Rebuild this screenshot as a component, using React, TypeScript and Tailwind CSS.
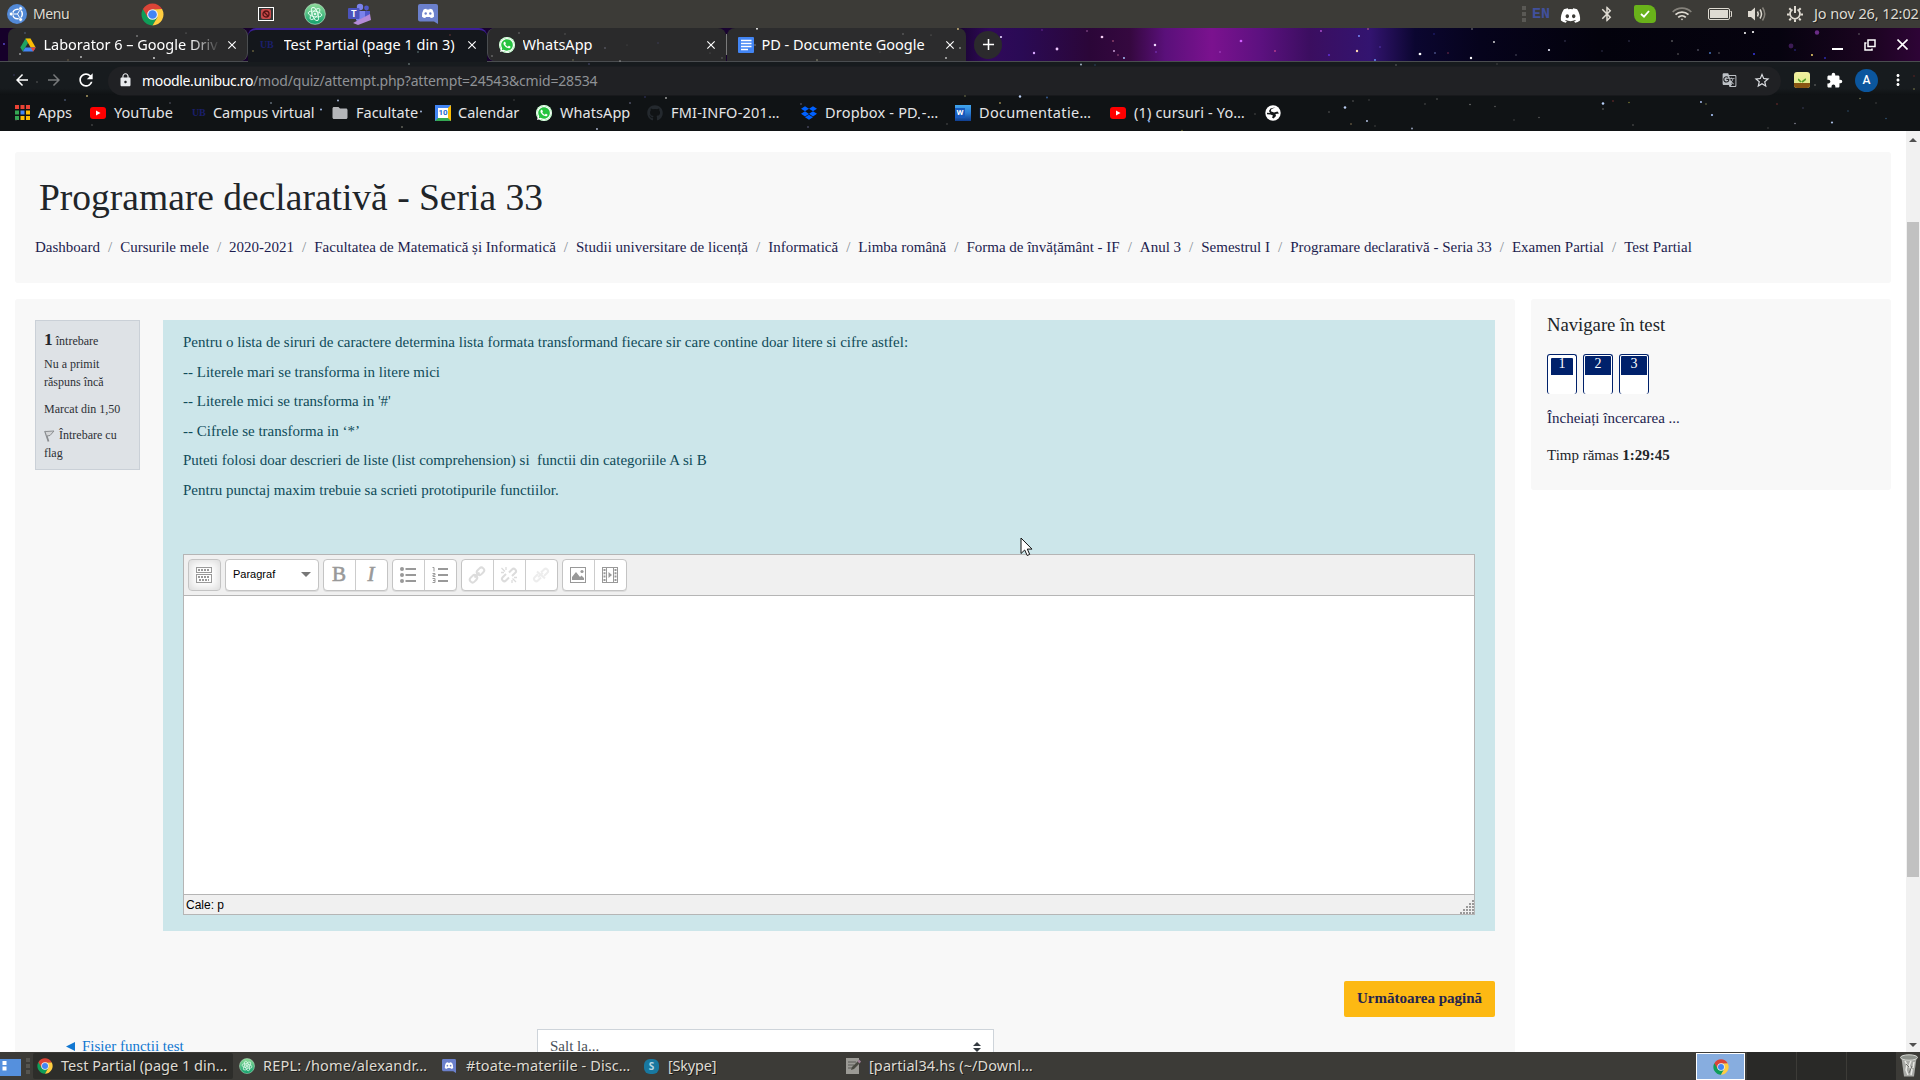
import React from 'react';
import { FaWhatsapp, FaGithub, FaDropbox, FaDiscord } from 'react-icons/fa';
import { MdArrowBack, MdArrowForward, MdRefresh, MdLock, MdStarBorder, MdExtension, MdMoreVert, MdGTranslate, MdFolder, MdBluetooth, MdClose, MdAdd } from 'react-icons/md';

const STARS: [number, number, number, string][] = [
  [4, 16, 1.2, '#5a4bd0'], [20, 26, 1, '#ddd'], [25, 5, 1, '#5a6a8a'], [81, 29, 1.1, '#ccc'], [154, 30, 1.2, '#ddd'], [137, 8, 1, '#aaa'], [186, 5, .7, '#888'], [68, 32, .8, '#875'],
  [253, 23, 1, '#998d50'], [369, 28, 1.2, '#ddd'], [302, 14, .8, '#556'], [450, 7, .8, '#844'], [418, 24, .8, '#8aa'], [409, 36, .9, '#9aa'],
  [519, 5, 1, '#777'], [565, 6, .8, '#666'], [605, 20, .9, '#778'], [658, 15, .8, '#446'], [627, 17, .7, '#555'], [573, 32, .8, '#886'], [620, 33, .9, '#aaa'], [710, 25, .7, '#666'], [492, 28, .9, '#999'], [722, 30, .8, '#777'],
  [757, 0.8, 1.2, '#eee'], [755, 17, .9, '#999'], [958, 1, 1.2, '#c9b27a'], [946, 30, 1.1, '#ccc'], [817, 32, .9, '#aa8'], [903, 6, .8, '#888'], [960, 20, 1, '#ccc'], [931, 7, .7, '#777'], [880, 24, .7, '#666'],
  [1001, 9, 1.4, '#e8d8ff'], [1034, 25, 1.5, '#d9a8ff'], [1057, 21, 1.8, '#f0c8ff'], [1102, 9, 1.7, '#f7d0f5'], [1113, 13, 1, '#c86a8a'], [1114, 23, 1.1, '#d8b0e8'], [1118, 27, .9, '#b06090'], [1124, 30, 1.2, '#a8c8ff'], [1155, 17, 1.6, '#f0d8ff'], [1156, 24, 1, '#8040d0'], [1241, 13, 1.7, '#d060ff'], [1220, 24, 1, '#b050d0'], [1275, 23, 1.1, '#c04090'], [1321, 3, 1.2, '#b050d0'], [1329, 27, 1.4, '#6030d0'], [1359, 8, 1.2, '#7a90ff'], [1368, 1, 1, '#d07090'], [1357, 23, 1.5, '#ffd8b0'], [1375, 32, 1.1, '#70a0ff'], [1380, 19, .9, '#6040c0'], [1420, 26, 1.7, '#fff'], [1435, 25, 1, '#7080c0'], [1448, 25, 1, '#803050'], [1434, 6, .8, '#3030a0'], [1087, 3, 1, '#a060a0'], [1042, 2, .9, '#7030a0'],
  [1471, 30, 1.5, '#fff'], [1494, 14, 1.2, '#ddd'], [1472, 1, 1, '#888'], [1549, 22, 1.4, '#eef'], [1516, 27, 1, '#556'], [1565, 13, .8, '#557'], [1602, 23, .8, '#446'], [1629, 13, .9, '#446'], [1672, 13, 1, '#888'], [1678, 26, .9, '#777'], [1698, 22, 1, '#778'], [1710, 25, 1.1, '#5080d0'], [1719, 25, .9, '#777'], [1745, 5, 1.3, '#fff'], [1753, 4, 1.4, '#fff'], [1754, 26, 1.1, '#4040ff'], [1812, 27, 1.2, '#ffe070'], [1817, 4.5, 2.8, '#6a2c86'], [1791, 18, 3, '#3c1b55'], [1825, 30, 1.1, '#3030c0'], [1859, 6, .9, '#777'], [1795, 22, 1, '#3030a0'],
  [1081, 36.5, 1.3, '#9ab'], [1095, 37, .8, '#357'], [1396, 37, 1, '#666'], [1497, 36, .8, '#555'], [589, 36, .9, '#558'],
  [87, 68, 1.1, '#bba96a'], [65, 72, 1, '#667aa0'], [338, 72.5, 1.2, '#a8b8d8'], [170, 75, .9, '#667'], [271, 75, 1, '#9ab'], [321, 81.5, 1.3, '#9ab4e0'], [421, 83.5, 1.2, '#a8bce0'], [16, 92, .8, '#555'], [92, 97, .9, '#666'], [402, 99, 1, '#998'],
  [514, 72, .8, '#555'], [645, 69, .8, '#448'], [666, 70, 1.1, '#aaa'], [630, 75, .9, '#88a'], [597, 101, 1.2, '#aab4cc'], [801, 76, 1, '#668'], [808, 99, 1, '#668'], [919, 90, 1.3, '#c8d4f0'], [965, 68, .9, '#885'], [947, 96, .8, '#666'],
  [1020, 68.5, 1.5, '#b8ccf0'], [1000, 75, 1.2, '#998a50'], [1047, 69.5, 1.2, '#355a90'], [1149, 93.5, 1.4, '#5a90e0'], [1255, 86, .9, '#555'], [1345, 79.5, 1.6, '#b8ccf0'], [1353, 73, .9, '#666'], [1369, 72, .8, '#555'], [1329, 84, .9, '#666'], [1367, 93, 1.3, '#aab8d8'], [1351, 96, 1, '#875'], [1412, 100.5, 1.3, '#8a94aa'], [1375, 98, .8, '#555'], [1425, 76, .8, '#666'], [1437, 71, .9, '#666'], [1182, 102.5, .9, '#773'],
  [1603, 75.5, 1.6, '#b8d0f8'], [1603, 81, .9, '#777'], [1613, 73, .9, '#833'], [1629, 74.5, 1, '#773'], [1470, 76.5, 1, '#777'], [1495, 78.5, .9, '#666'], [1539, 89.5, .9, '#666'], [1514, 92, .8, '#555'], [1701, 74, 1.3, '#a0b4e0'], [1706, 76, .9, '#885'], [1712, 87, 1.4, '#a8c4f8'], [1633, 97, .9, '#666'], [1777, 76, .9, '#833'], [1803, 80, .9, '#446'], [1795, 95.5, 1, '#889'], [1832, 94.5, 1.4, '#a8bce0'], [1848, 83, .9, '#357'], [1860, 70.5, 1, '#775'], [1886, 90.5, 1, '#357'], [1876, 75, .8, '#555'], [1914, 61, 1, '#885'], [1914, 48, 1, '#622'], [1815, 57, 1, '#777'], [1768, 100, .8, '#555'],
  [37, 54, .9, '#666'], [14, 47, .8, '#447'],
];

function Chrome({ s }: { s: number }) {
  return (
    <svg width={s} height={s} viewBox="0 0 48 48">
      <path d="M4.100 12.500A23 23 0 0 0 24 47L34.200 29.500 24 24z" fill="#0f9d58" />
      <path d="M43.900 12.500A23 23 0 0 1 24 47L34.200 29.500 24 13z" fill="#ffcd40" />
      <path d="M4.100 12.500A23 23 0 0 1 43.900 12.500L24 13.300 14 29.500z" fill="#db4437" />
      <circle cx="24" cy="24" r="11.200" fill="#f1f1f1" />
      <circle cx="24" cy="24" r="9" fill="#4285f4" />
    </svg>
  );
}
function Atom({ s }: { s: number }) {
  return (
    <svg width={s} height={s} viewBox="0 0 24 24" fill="none" stroke="#e9fff2" strokeWidth="1">
      <defs><linearGradient id="atomFill" x1="0" y1="0" x2="0" y2="1"><stop offset="0" stopColor="#8fdc9a" /><stop offset="1" stopColor="#12a06d" /></linearGradient></defs>
      <circle cx="12" cy="12" r="11.300" fill="url(#atomFill)" stroke="#bfeccb" strokeWidth=".7" />
      <ellipse cx="12" cy="12" rx="3" ry="7.500" transform="rotate(-20 12 12)" />
      <ellipse cx="12" cy="12" rx="3" ry="7.500" transform="rotate(40 12 12)" />
      <ellipse cx="12" cy="12" rx="3" ry="7.500" transform="rotate(100 12 12)" />
      <circle cx="12" cy="12" r="1" fill="#e9fff2" />
    </svg>
  );
}
function DiscordBox({ s }: { s: number }) {
  return (
    <svg width={s} height={s} viewBox="0 0 20 20">
      <path d="M2 0h16a2 2 0 0 1 2 2v18l-4-2.500H2a2 2 0 0 1-2-2V2a2 2 0 0 1 2-2z" fill="#6b80cc" />
      <path d="M5.600 5.600Q7 4.700 8.300 4.700l.4.700h2.600l.4-.7q1.300 0 2.700.9 2 3.300 1.600 7.100-1.600 1.300-3.200 1.400l-.8-1.200H8l-.8 1.200q-1.600-.1-3.200-1.400-.4-3.800 1.600-7.100z" fill="#fff" />
      <circle cx="7.700" cy="9.500" r="1.200" fill="#6b80cc" /><circle cx="12.300" cy="9.500" r="1.200" fill="#6b80cc" />
    </svg>
  );
}
function WhatsApp() {
  return (
    <span className="flex size-4 items-center justify-center rounded-full bg-[#25c33f] ring-1 ring-inset ring-white/90">
      <FaWhatsapp className="size-4 text-white" />
    </span>
  );
}
function Youtube() {
  return <span className="flex h-3 w-4 items-center justify-center rounded-[3px] bg-[#f00]"><svg width="6" height="6" viewBox="0 0 6 6"><path d="M1 .5 5.500 3 1 5.500z" fill="#fff" /></svg></span>;
}
function UB() {
  return <span className="w-4 font-['Liberation_Serif',serif] text-[10px] leading-none font-bold tracking-[-0.3px] text-[#1b1f6b]">UB</span>;
}
function Drive() {
  return (
    <svg width="16" height="16" viewBox="0 0 16 16">
      <path d="M5.500 1.500h5L8 6z" fill="#188038" /><path d="M5.500 1.500 .3 10.500l2.500 4L8 5.900z" fill="#1ea362" /><path d="M10.500 1.500l5.200 9h-5L5.500 1.500z" fill="#fbbc04" /><path d="M5.300 10.500H15.700l-2.500 4H2.800z" fill="#4285f4" /><path d="M10.700 10.500h5l-2.500 4z" fill="#ea4335" />
    </svg>
  );
}
function Docs() {
  return <svg width="16" height="16" viewBox="0 0 16 16"><rect width="16" height="16" rx="1" fill="#4285f4" /><path d="M3 3.500h10.500M3 6.500h10.500M3 9.500h10.500M3 12.500h7" stroke="#fff" strokeWidth="1.500" /></svg>;
}
function Calendar() {
  return (
    <span className="grid size-4 place-items-center border-[3px] border-t-[#4285f4] border-r-[#fbbc04] border-b-[#34a853] border-l-[#4285f4] bg-white font-['Roboto',sans-serif] text-[8px] leading-none font-bold text-[#1967d2]">10</span>
  );
}
function Word() {
  return (
    <span className="flex size-4 items-center bg-linear-to-b from-[#41a5ee] via-[#2b7cd3] to-[#103f91]">
      <span className="grid size-[10px] place-items-center bg-[#185abd] font-['Roboto',sans-serif] text-[8px] leading-none font-bold text-white">W</span>
    </span>
  );
}
const APP_COLORS = ['#ea4335', '#ea4335', '#ea4335', '#34a853', '#4285f4', '#fbbc04', '#34a853', '#fbbc04', '#fbbc04'];
function AppsIcon() {
  return <svg width="15" height="15" viewBox="0 0 15 15">{APP_COLORS.map((c, i) => <rect key={i} x={(i % 3) * 5.500} y={Math.floor(i / 3) * 5.500} width="4" height="4" fill={c} />)}</svg>;
}
function Globe() {
  return <svg width="16" height="16" viewBox="0 0 16 16"><circle cx="8" cy="8" r="7.700" fill="#fff" /><path d="M10.500 2.200 6.300 4.300 5.800 6.200 9 7.500 12.500 6.500 14 8.500 10.500 9 11 11 8.500 13.500 7 12.500 8 10.500 5.500 9.500 2 9.300 2 7.800 5 8 4 6 5.500 3.500z" fill="#15181a" /><path d="M6.800 5.200 10 6.300 9.500 4z" fill="#fff" /></svg>;
}

const BAR = "font-['Noto_Sans',sans-serif] text-[14.500px] whitespace-nowrap";

const BOOKMARKS: { icon: React.ReactNode; label: string; w: string; ls: string; gap: string }[] = [
  { icon: <AppsIcon />, label: 'Apps', w: 'w-[75px]', ls: 'tracking-normal', gap: 'gap-2' },
  { icon: <Youtube />, label: 'YouTube', w: 'w-[102px]', ls: 'tracking-[0.060px]', gap: 'gap-2' },
  { icon: <UB />, label: 'Campus virtual', w: 'w-[140px]', ls: 'tracking-[-0.080px]', gap: 'gap-[5px]' },
  { icon: <MdFolder className="-mx-px size-[18px] text-[#b4b6b9]" />, label: 'Facultate', w: 'w-[103px]', ls: 'tracking-normal', gap: 'gap-2' },
  { icon: <Calendar />, label: 'Calendar', w: 'w-[101px]', ls: 'tracking-[0.020px]', gap: 'gap-[7px]' },
  { icon: <WhatsApp />, label: 'WhatsApp', w: 'w-[111px]', ls: 'tracking-[0.060px]', gap: 'gap-2' },
  { icon: <FaGithub className="size-4 text-[#24292e]" />, label: 'FMI-INFO-201…', w: 'w-[154px]', ls: 'tracking-[0.200px]', gap: 'gap-2' },
  { icon: <FaDropbox className="size-4 text-[#0061ff]" />, label: 'Dropbox - PD -…', w: 'w-[154px]', ls: 'tracking-[0.190px]', gap: 'gap-2' },
  { icon: <Word />, label: 'Documentatie…', w: 'w-[155px]', ls: 'tracking-[0.330px]', gap: 'gap-2' },
  { icon: <Youtube />, label: '(1) cursuri - Yo…', w: 'w-[155px]', ls: 'tracking-[0.160px]', gap: 'gap-2' },
  { icon: <Globe />, label: '', w: 'w-[16px]', ls: 'tracking-normal', gap: 'gap-0' },
];

function Tab({ icon, title, ls, cls, fade }: { icon: React.ReactNode; title: string; ls: string; cls: string; fade?: boolean }) {
  return (
    <div className={'flex h-[33px] shrink-0 items-center pr-[8px] pl-3 ' + cls}>
      <span className="flex w-[23.500px] shrink-0 items-center">{icon}</span>
      <span className={'flex-1 overflow-hidden leading-[33px] ' + ls + (fade ? ' [mask-image:linear-gradient(to_right,#000_82%,transparent_100%)]' : '')}>{title}</span>
      <MdClose className="ml-1 size-[14px] shrink-0" />
    </div>
  );
}

function TopPanel() {
  return (
    <div className={'flex h-7 items-center bg-[#3c3b37] text-[#dfdbd2] ' + BAR}>
      <svg className="ml-[7px]" width="20" height="20" viewBox="0 0 20 20">
        <circle cx="10" cy="10" r="10" fill="#5289d6" />
        <circle cx="10.500" cy="10" r="4.800" fill="none" stroke="#fff" strokeWidth="1.500" />
        <path d="M10.500 10 5.500 10M10.500 10l2.500-4.300M10.500 10l2.500 4.300" stroke="#fff" strokeWidth="1" />
        <g fill="#fff" stroke="#5289d6" strokeWidth=".7"><circle cx="4.200" cy="10" r="1.900" /><circle cx="13.600" cy="4.500" r="1.900" /><circle cx="13.600" cy="15.500" r="1.900" /></g>
      </svg>
      <span className="ml-[6px] w-[108px] -translate-y-[0.500px] text-[14px] leading-[26px] tracking-[-0.400px] [text-shadow:1px_1px_0_#222]">Menu</span>
      <Chrome s={23} />
      <span className="ml-[94px] grid h-[14px] w-4 place-items-center border border-white bg-[#353535]">
        <svg width="10" height="10" viewBox="0 0 10 10"><rect width="10" height="10" rx="2" fill="#c94a4a" /><circle cx="5" cy="5" r="3" fill="none" stroke="#571414" strokeWidth="1.300" /><path d="m3 3 4 4" stroke="#571414" strokeWidth="1.200" /></svg>
      </span>
      <span className="ml-[30px]"><Atom s={22} /></span>
      <svg className="ml-[22px]" width="23" height="22" viewBox="0 0 23 22">
        <circle cx="12" cy="4" r="3.200" fill="#7b83eb" /><circle cx="18.500" cy="5" r="2.400" fill="#5059c9" />
        <path d="M8 8h9v8a5 5 0 0 1-9 1z" fill="#7b83eb" /><path d="M17 8h5v6a3.500 3.500 0 0 1-5 3z" fill="#5059c9" />
        <rect y="5" width="11.500" height="11" rx="1" fill="#4b53bc" />
        <text x="5.800" y="13.500" textAnchor="middle" fontSize="9" fontWeight="700" fill="#fff" fontFamily="Roboto, sans-serif">T</text>
        <path d="M5 20 22 11l1 6-13 5z" fill="#b58bd8" />
      </svg>
      <span className="ml-[47px]"><DiscordBox s={20} /></span>
      <div className="ml-auto flex items-center">
        <span className="grid w-1 gap-[2px]"><i className="size-1 bg-[#5a5955]" /><i className="size-1 bg-[#5a5955]" /><i className="size-1 bg-[#5a5955]" /></span>
        <b className="ml-[6px] w-[30px] font-['Liberation_Mono',monospace] text-[15px] leading-[27px] text-[#41509c]">EN</b>
        <FaDiscord className="-ml-[2px] size-[21px] translate-y-px text-white" />
        <MdBluetooth className="ml-[17px] size-[18px]" />
        <span className="ml-[18px] grid h-[18px] w-[22px] place-items-center rounded-[2px_8px_4px_8px] bg-[#69b21a]">
          <svg width="10" height="8" viewBox="0 0 10 8"><path d="m1 4 3 2.700L9 1" fill="none" stroke="#fff" strokeWidth="1.800" /></svg>
        </span>
        <svg className="ml-[16px]" width="20" height="14" viewBox="0 0 20 14" fill="none" stroke="#dfdbd2" strokeWidth="1.700">
          <path d="M.7 5a13 13 0 0 1 18.600 0" stroke="#85827b" /><path d="M3.500 7.700a9.300 9.300 0 0 1 13 0M6.200 10.300a5.500 5.500 0 0 1 7.600 0" /><circle cx="10" cy="12.400" r=".8" fill="#dfdbd2" stroke="none" />
        </svg>
        <svg className="ml-[16px]" width="24" height="12" viewBox="0 0 24 12"><rect x=".5" y=".5" width="21" height="11" rx="1.500" fill="none" stroke="#dfdbd2" /><rect x="2" y="2" width="18" height="8" fill="#dfdbd2" /><path d="M22.500 3.500h1v5h-1" fill="none" stroke="#dfdbd2" /></svg>
        <svg className="ml-[16px]" width="20" height="18" viewBox="0 0 20 18" fill="none" stroke="#dfdbd2" strokeWidth="1.500">
          <path d="M0 6h3l4-3.500v13L3 12H0z" fill="#dfdbd2" stroke="none" /><path d="M9.500 6.500q1.500 2.500 0 5M12 4.500q3 4.500 0 9" /><path d="M14.500 2.500q4.500 6.500 0 13" stroke="#85827b" />
        </svg>
        <svg className="ml-[19px]" width="16" height="16" viewBox="0 0 16 16" fill="none" stroke="#dfdbd2">
          <path d="M5.500 3.500a5 5 0 1 0 5 0" strokeWidth="1.800" /><path d="M8 0v7" strokeWidth="2" /><path d="M0 8.500h2.500M13.500 8.500H16M2.300 2.300 4 4M13.700 2.300 12 4M2.300 14.200 4 12.500M13.700 14.200 12 12.500M8 13.500V16" strokeWidth="2" />
        </svg>
        <span className="ml-[11px] w-[106px] -translate-y-px tracking-[-0.100px] leading-[27px] [text-shadow:1px_1px_0_#222]">Jo nov 26, 12:02</span>
      </div>
    </div>
  );
}

function BrowserChrome() {
  return (
    <div className={'relative h-[103px] overflow-hidden bg-[#101315] text-white ' + BAR}>
      <div className="flex h-[34px] items-center border-b border-[#4a4d50] bg-[linear-gradient(90deg,#16002a_0px,#1a0433_960px,#30095a_990px,#2a0a55_1020px,#2b0638_1090px,#35083f_1130px,#5a107a_1165px,#7b128f_1212px,#5d1180_1260px,#3b0e60_1310px,#331470_1370px,#0b0630_1415px,#06031c_1480px,#03020c_1600px,#06030f_1780px,#1b0420_1870px,#2e0436_1920px)] pl-2">
        <Tab icon={<Drive />} title="Laborator 6 – Google Driv" ls="tracking-[-0.020px]" fade cls="w-[240px] rounded-t-lg rounded-br-lg border-r border-[#4a4d50] bg-[#2a2a2b]" />
        <Tab icon={<UB />} title="Test Partial (page 1 din 3)" ls="tracking-normal" cls="-mb-px w-[239px] !h-[34px] rounded-t-lg border-t-2 border-[#3c1f96] bg-[#14171c] pb-[3px]" />
        <Tab icon={<WhatsApp />} title="WhatsApp" ls="tracking-[0.020px]" cls="w-[239px] rounded-t-lg rounded-bl-lg border-l border-[#4a4d50] bg-[#2a2a2b] !pl-[11px]" />
        <i className="h-[21px] w-px bg-[#7a7a7a]" />
        <Tab icon={<Docs />} title="PD - Documente Google" ls="tracking-[-0.030px]" cls="w-[239px] rounded-t-lg bg-[#2c2c2d] !pl-[11px] !pr-[9px]" />
        <span className="ml-[8px] grid size-7 place-items-center rounded-full bg-[#2b2a2d]"><MdAdd className="size-[19px]" /></span>
        <span className="mt-[9px] ml-auto h-[1.500px] w-[11px] bg-white" />
        <svg className="ml-[21px]" width="12" height="12" viewBox="0 0 12 12" fill="none" stroke="#fff" strokeWidth="1.500"><path d="M4 1h7v6.500H4zM2.500 4H1v7h7V9.500" /></svg>
        <svg className="mr-[12px] ml-[21px]" width="11" height="11" viewBox="0 0 11 11" stroke="#fff" strokeWidth="1.600"><path d="m.5.5 10 10M10.500.5l-10 10" /></svg>
      </div>
      <div className="flex h-[33px] items-center bg-linear-to-b from-[#171b1e] from-80% to-[#0f1214] pt-[3px]">
        <MdArrowBack className="ml-[13px] size-[18px]" />
        <MdArrowForward className="ml-[14px] size-[18px] text-[#77797b]" />
        <MdRefresh className="ml-[13px] size-[20px]" />
        <div className="ml-[12px] flex h-[29px] w-[1673px] translate-y-[0.500px] items-center rounded-full bg-[#202124] pb-px pl-[10px]">
          <MdLock className="size-[15px] text-[#e8eaed]" />
          <span className="ml-[9px] text-[14px] leading-[27px]"><span className="tracking-[-0.340px]">moodle.unibuc.ro</span><span className="tracking-[-0.180px] text-[#8f9296]">/mod/quiz/attempt.php?attempt=24543&amp;cmid=28534</span></span>
          <MdGTranslate className="mr-[16px] ml-auto size-[15px] text-[#bdc1c6]" />
          <MdStarBorder className="mr-[10px] size-[18px] text-[#dadce0]" />
        </div>
        <span className="ml-[13px] flex h-4 w-4 flex-col items-center justify-end overflow-hidden rounded-[3px] bg-linear-to-b from-[#f3f0a0] to-[#dcec86]"><svg width="8" height="6" viewBox="0 0 8 6"><path d="M0 2l3 3M8 2 4 5" stroke="#5aa02c" strokeWidth="1.700" /></svg><i className="h-[5px] w-full bg-[#8a5512]" /></span>
        <MdExtension className="ml-[16px] size-[17px]" />
        <span className="ml-[12px] grid size-[23px] place-items-center rounded-full bg-[#0b569e] font-['Roboto',sans-serif] text-[12px] leading-none font-medium">A</span>
        <MdMoreVert className="ml-[11px] size-[18px]" />
      </div>
      <div className="flex h-[36px] items-center pb-px pl-[15px] text-[#e4e5e7]">
        {BOOKMARKS.map((b, i) => (
          <div key={i} className={'flex shrink-0 items-center ' + b.w + ' ' + b.gap}>
            {b.icon}
            <span className={'leading-[35px] -translate-y-[0.500px] ' + b.ls}>{b.label}</span>
          </div>
        ))}
      </div>
      <svg className="pointer-events-none absolute inset-0" width="1920" height="103">
        {STARS.map(([x, y, r, c], i) => <circle key={i} cx={x} cy={y} r={r * 0.800} fill={c} />)}
      </svg>
    </div>
  );
}

const CRUMBS = ['Dashboard', 'Cursurile mele', '2020-2021', 'Facultatea de Matematică și Informatică', 'Studii universitare de licență', 'Informatică', 'Limba română', 'Forma de învățământ - IF', 'Anul 3', 'Semestrul I', 'Programare declarativă - Seria 33', 'Examen Partial', 'Test Partial'];
const LINES = [
  'Pentru o lista de siruri de caractere determina lista formata transformand fiecare sir care contine doar litere si cifre astfel:',
  '-- Literele mari se transforma in litere mici',
  "-- Literele mici se transforma in '#'",
  '-- Cifrele se transforma in ‘*’',
  'Puteti folosi doar descrieri de liste (list comprehension) si\u00a0 functii din categoriile A si B',
  'Pentru punctaj maxim trebuie sa scrieti prototipurile functiilor.',
];

const GROUP = 'flex h-8 divide-x divide-[#ccc] rounded-[4px] border border-[#c4c4c4] bg-white text-[#999] shadow-[0_1px_0_#ddd]';
const CELL = 'grid flex-1 place-items-center pr-px';

function LinkGlyph() {
  return <svg width="18" height="18" viewBox="0 0 18 18" fill="none" stroke="#dcdcdc" strokeWidth="2"><rect x="8.500" y="2.500" width="8" height="5.500" rx="2.700" transform="rotate(-45 12.500 5.250)" /><rect x="1.500" y="10" width="8" height="5.500" rx="2.700" transform="rotate(-45 5.500 12.750)" /><path d="m6.500 11.500 5-5" /></svg>;
}
function UnlinkGlyph({ faint }: { faint?: boolean }) {
  return (
    <svg width="18" height="18" viewBox="0 0 18 18" fill="none" stroke={faint ? '#ededed' : '#dcdcdc'} strokeWidth="2">
      <path d="M9 6.500 12 3.500a2.300 2.300 0 0 1 3.300 3.300L12 10M9 11.500l-3 3a2.300 2.300 0 0 1-3.300-3.300L6 8" />
      {faint ? <path d="M5 5.500l8 7M6 11l5-4" /> : <path d="M1.500 2 5 5.500M6 1v3M1 6.500h3M12.500 12.500 16 16M12 14v3M14 11.500h3" strokeWidth="1.300" />}
    </svg>
  );
}

function Editor() {
  return (
    <div className="mt-[53px] flex h-[361px] flex-col border border-[#b5b5b5] bg-white">
      <div className="flex h-[41px] shrink-0 gap-1 border-b border-[#b5b5b5] bg-[#f0f0f0] p-1">
        <div className="grid h-8 w-[33px] place-items-center rounded-[4px] border border-[#c4c4c4] bg-white pr-px shadow-[inset_0_0_9px_2px_#dcdcdc]">
          <svg width="16" height="16" viewBox="0 0 16 16" fill="none" stroke="#999">
            <rect x=".5" y=".5" width="15" height="5" /><rect x=".5" y="7.500" width="15" height="8" />
            <path d="M2 3h12" strokeWidth="2" strokeDasharray="2 1" /><path d="M2 10h12M3 13h10" strokeWidth="2" strokeDasharray="2 1" />
          </svg>
        </div>
        <div className="flex h-8 w-[94px] items-center justify-between rounded-[4px] border border-[#c4c4c4] bg-white pr-[7px] pl-[7px] font-['Liberation_Sans',sans-serif] text-[11px] text-black shadow-[0_1px_0_#ddd]">
          <span className="-translate-y-px">Paragraf</span>
          <svg width="10" height="5" viewBox="0 0 10 5"><path d="M0 0h10L5 5z" fill="#777" /></svg>
        </div>
        <div className={GROUP + ' w-[65px]'}>
          <span className={CELL + ' text-[21px] leading-none [-webkit-text-stroke:0.600px_#999]'}>B</span>
          <span className={CELL + ' text-[21px] leading-none italic [-webkit-text-stroke:0.600px_#999]'}>I</span>
        </div>
        <div className={GROUP + ' w-[65px]'}>
          <span className={CELL}><svg width="16" height="16" viewBox="0 0 16 16" fill="#999"><circle cx="2" cy="2" r="2" /><circle cx="2" cy="8" r="2" /><circle cx="2" cy="14" r="2" /><path d="M5.500 1H16v2H5.500zM5.500 7H16v2H5.500zM5.500 13H16v2H5.500z" /></svg></span>
          <span className={CELL}><svg width="16" height="16" viewBox="0 0 16 16" fill="none" stroke="#999"><path d="M6 2h10M6 8h10M6 14h10" strokeWidth="2" /><path d="M.5.5h1.500v4M.5 6.500h2.500v1.500H1v1.500h2.500M.5 11.500h2.500v4H.5M1 13.500h2" /></svg></span>
        </div>
        <div className={GROUP + ' w-[97px]'}>
          <span className={CELL}><LinkGlyph /></span>
          <span className={CELL}><UnlinkGlyph /></span>
          <span className={CELL}><UnlinkGlyph faint /></span>
        </div>
        <div className={GROUP + ' w-[65px]'}>
          <span className={CELL}><svg width="16" height="16" viewBox="0 0 16 16"><rect x=".5" y=".5" width="15" height="15" fill="none" stroke="#999" /><path d="M2 13V10l4-5 4 5 1.500-1.500L14 11v2z" fill="#999" /><circle cx="12" cy="4.500" r="1.600" fill="#999" /></svg></span>
          <span className={CELL}><svg width="16" height="16" viewBox="0 0 16 16" fill="none" stroke="#999"><rect x=".5" y=".5" width="15" height="15" /><path d="M4.500 0v16M11.500 0v16" /><path d="M2.500 2v13M13.500 2v13" strokeWidth="2" strokeDasharray="2 1.300" /><path d="M6.500 5v6L10 8z" fill="#999" stroke="none" /></svg></span>
        </div>
      </div>
      <div className="flex-1" />
      <div className="flex h-5 shrink-0 items-center justify-between border-t border-[#b5b5b5] bg-[#f0f0f0] pl-[2px] font-['Liberation_Sans',sans-serif] text-[12px] text-black">
        <span className="translate-y-px">Cale: p</span>
        <svg className="self-end" width="14" height="15" viewBox="0 0 14 15">
          {[0, 1, 2, 3, 4].flatMap(r => Array.from({ length: r + 1 }, (_, c) => <rect key={r + '-' + c} x={12 - c * 3} y={1 + r * 3} width="2" height="2" fill="#999" />))}
        </svg>
      </div>
    </div>
  );
}

function Page() {
  return (
    <main className="flex h-[921px] overflow-hidden bg-white font-['Liberation_Serif',serif] text-[15px] text-[#212529]">
      <div className="w-[1906px] shrink-0 px-[15px] pt-[21px]">
        <header className="h-[131px] rounded-[3px] bg-[#f8f8f8] px-5 pt-[23px]">
          <h1 className="pl-1 text-[37.500px] leading-[45px]">Programare declarativă - Seria 33</h1>
          <nav className="mt-[16px] flex leading-[22px] whitespace-nowrap text-[#1d1d4f]">
            {CRUMBS.map((c, i) => (
              <span key={c} className="flex">
                {i > 0 && <span className="px-[8px] text-[#868e96]">/</span>}
                {c}
              </span>
            ))}
          </nav>
        </header>
        <div className="mt-4 flex items-start gap-4">
          <section className="h-[800px] w-[1500px] rounded-[3px] bg-[#f8f8f8] px-5 pt-[21px]">
            <div className="flex items-start gap-[23px]">
              <div className="h-[150px] w-[105px] border border-[#cad0d7] bg-[#dee2e6] px-2 pt-[9px] text-[12px] leading-[18px] text-[#2d3035]">
                <div className="h-[18px] whitespace-nowrap"><b className="text-[17.500px] text-[#212529]">1</b> întrebare</div>
                <div className="mt-[7px]">Nu a primit<br />răspuns încă</div>
                <div className="mt-[9px]">Marcat din 1,50</div>
                <div className="mt-2">
                  <svg className="mr-[4px] inline-block" width="11" height="12" viewBox="0 0 11 12" fill="none" stroke="#8a8d90"><path d="M1 1l3.500 10.500" strokeWidth="1.800" /><path d="M1.500 1.500 10 1 6 5.500 3 6" fill="#d4d6d8" /></svg>
                  Întrebare cu flag
                </div>
              </div>
              <div className="h-[611px] w-[1332px] bg-[#cce6ea] px-5 pt-[11px]">
                <div className="grid gap-[7.600px] leading-[22px] text-[#0f4b59]">
                  {LINES.map(l => <p key={l}>{l}</p>)}
                </div>
                <Editor />
              </div>
            </div>
            <div className="mt-[50px] flex justify-end">
              <button className="h-9 w-[151px] rounded-[2px] bg-[#fdb913] pb-[2px] font-bold text-[#23234f]">Următoarea pagină</button>
            </div>
            <div className="mt-3 flex h-[34px] items-center">
              <a className="flex w-[502px] items-center gap-[7px] pl-[31px] text-[#1177d1]"><svg width="9" height="9" viewBox="0 0 9 9"><path d="M9 0v9L0 4.500z" fill="#1177d1" /></svg>Fisier functii test</a>
              <div className="flex h-[34px] w-[457px] items-center justify-between border border-[#ced4da] bg-white pr-[12px] pl-3 text-[#495057]">
                Salt la...
                <svg className="translate-y-px" width="8" height="10" viewBox="0 0 8 10" fill="#343a40"><path d="M4 0l4 4H0zM4 10 0 6h8z" /></svg>
              </div>
            </div>
          </section>
          <aside className="h-[191px] w-[360px] rounded-[3px] bg-[#f8f8f8] px-4 pt-[15px]">
            <h2 className="text-[18.750px] leading-[22px] tracking-[-0.040px]">Navigare în test</h2>
            <div className="mt-[18px] flex gap-[6px]">
              {['1', '2', '3'].map((n, i) => (
                <div key={n} className={'h-10 w-[30px] rounded-[3px] border border-b-0 border-[#00216b] bg-white ' + (i === 0 ? 'px-[3px] pt-[3px]' : 'px-px pt-px')}>
                  <div className={'rounded-t-[1px] bg-[#00216b] text-center text-[14px] text-white ' + (i === 0 ? 'h-[17px] leading-[11px]' : 'h-[19px] leading-[15px]')}>{n}</div>
                </div>
              ))}
            </div>
            <div className="mt-[13px] leading-[22px] text-[#1d1d4f]">Încheiați încercarea ...</div>
            <div className="mt-[15px] leading-[22px]">Timp rămas <b>1:29:45</b></div>
          </aside>
        </div>
      </div>
      <div className="flex w-[14px] shrink-0 flex-col items-center bg-[#f1f1f1] pt-[7px] pb-[5px]">
        <svg width="8" height="4" viewBox="0 0 8 4"><path d="M4 0l4 4H0z" fill="#505050" /></svg>
        <div className="mt-[80px] h-[655px] w-[12px] bg-[#c1c1c1]" />
        <svg className="mt-auto" width="8" height="4" viewBox="0 0 8 4"><path d="M0 0h8L4 4z" fill="#505050" /></svg>
      </div>
    </main>
  );
}

function Task({ icon, label, w, ls, cls }: { icon: React.ReactNode; label: string; w: string; ls: string; cls?: string }) {
  return (
    <div className={'flex h-[26px] shrink-0 items-center pl-1 ' + w + ' ' + (cls ?? '')}>
      <span className="flex w-6 shrink-0">{icon}</span>
      <span className={'-translate-y-px leading-[26px] [text-shadow:1px_1px_0_#1c1c1c] ' + ls}>{label}</span>
    </div>
  );
}

function Taskbar() {
  return (
    <div className={'flex h-7 items-center bg-[#3c3b37] text-[#dfdbd2] ' + BAR}>
      <svg width="21" height="20" viewBox="0 0 21 20"><rect width="21" height="20" fill="#5590dd" /><rect width="21" height="3" fill="#3b3b3b" /><path d="M2.500 5h4v4h-4zM2.500 10.500h4v4h-4z" fill="#fff" /></svg>
      <span className="mr-[3px] ml-[5px] grid w-1 gap-[2px]"><i className="size-1 bg-[#55544f]" /><i className="size-1 bg-[#55544f]" /><i className="size-1 bg-[#55544f]" /></span>
      <Task icon={<Chrome s={16} />} label="Test Partial (page 1 din…" ls="tracking-normal" w="w-[200px]" cls="rounded-[2px] bg-[#2d2d2a]" />
      <Task icon={<Atom s={16} />} label="REPL: /home/alexandr…" ls="tracking-[0.200px]" w="w-[202px] ml-[2px]" />
      <Task icon={<DiscordBox s={14} />} label="#toate-materiile - Disc…" ls="tracking-[0.100px]" w="w-[202px] ml-px" />
      <Task icon={<span className="grid size-[15px] place-items-center rounded-[6px] bg-[#1878a0] text-[10px] leading-none font-bold text-[#b8d8e4]">S</span>} label="[Skype]" ls="tracking-[-0.200px]" w="w-[202px]" />
      <Task icon={<svg width="16" height="16" viewBox="0 0 16 16"><rect x="1" width="13" height="16" fill="#9b9a95" /><path d="M3 4h8M3 7h6M3 10h5" stroke="#5a5a56" /><path d="m6 12 1-3 6.500-6.500 2 2L9 11z" fill="#4a4a42" /><path d="m12.500 3.500 1.500-2 2 2-1.500 2z" fill="#a07f98" /></svg>} label="[partial34.hs (~/Downl…" ls="tracking-[0.100px]" w="w-[202px] -ml-[1px]" />
      <div className="ml-auto flex h-7 items-center gap-px">
        <div className="grid h-[27px] w-[49px] -translate-x-px place-items-center self-end border border-white bg-[#87addf]"><Chrome s={16} /></div>
        <div className="h-7 w-[49px] bg-[#292927]" /><div className="h-7 w-[49px] bg-[#292927]" /><div className="h-7 w-[49px] bg-[#292927]" />
        <svg className="mr-px ml-[2px]" width="20" height="24" viewBox="0 0 20 24"><path d="M2.500 4 5 22.500h10L17.500 4z" fill="#a9aaa6" /><path d="M6 7l2 4-1 5 2 5M12 7l-2 5 3 4-1 5M15 8l-1 6" fill="none" stroke="#e8e8e4" strokeWidth="1.500" /><path d="M7 10l3 3M13 12l-3 7" stroke="#6d6e6a" /><ellipse cx="10" cy="3.500" rx="8.500" ry="2.700" fill="#8d918b" stroke="#d4d6d1" /></svg>
      </div>
    </div>
  );
}

export default function App() {
  return (
    <div className="relative h-[1080px] w-[1920px] overflow-hidden">
      <TopPanel />
      <BrowserChrome />
      <Page />
      <Taskbar />
      <svg className="absolute top-[537px] left-[1020px]" width="13" height="20" viewBox="0 0 13 20"><path d="M1 1v15.500l3.700-3.500 2.500 5.500 2.500-1.100-2.400-5.300H12z" fill="#fff" stroke="#111" /></svg>
    </div>
  );
}
